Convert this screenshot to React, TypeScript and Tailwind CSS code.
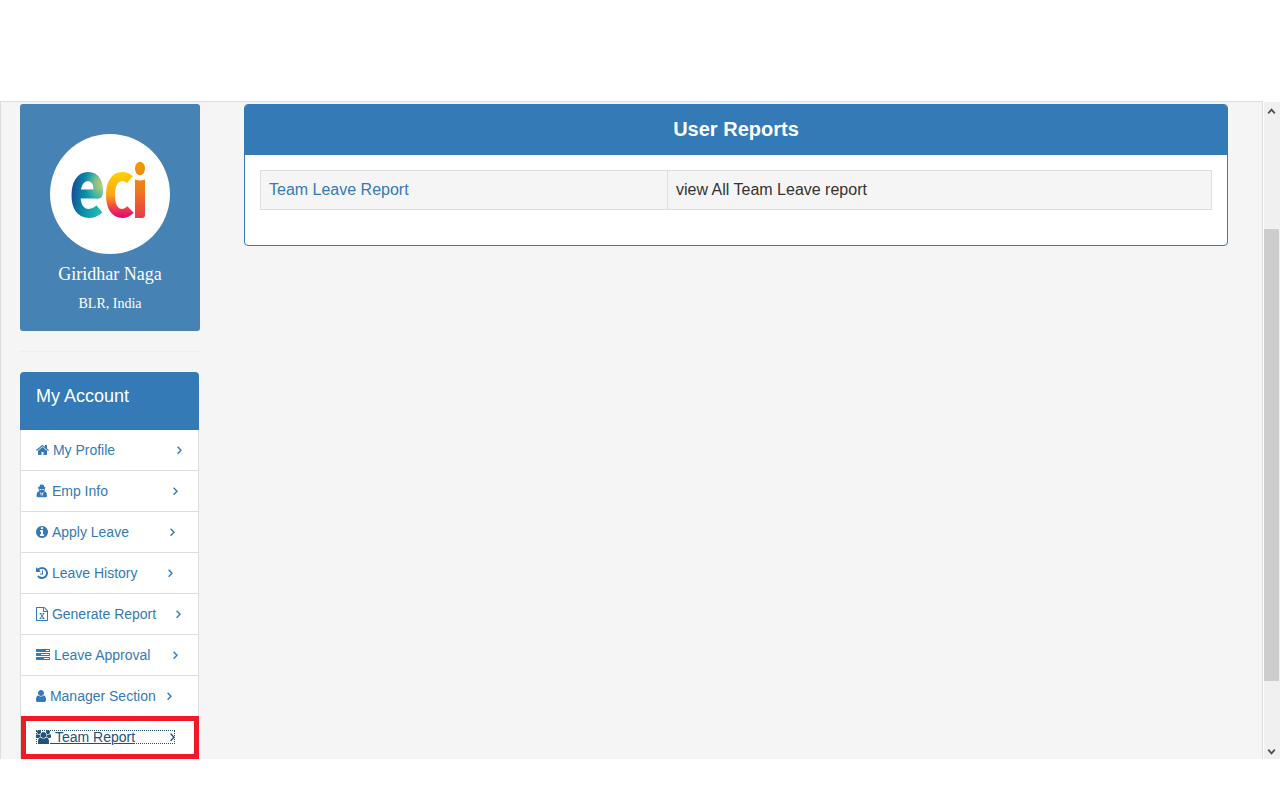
import React from "react";

const PATHS = {
  home: "M1472 992v480q0 26-19 45t-45 19h-384v-384h-256v384h-384q-26 0-45-19t-19-45v-480q0-1 .5-3t.5-3l575-474 575 474q1 2 1 6zm223-69l-62 74q-8 9-21 11h-3q-13 0-21-7l-692-577-692 577q-12 8-24 7-13-2-21-11l-62-74q-8-10-7-23.5t11-21.5l719-599q32-26 76-26t76 26l244 204v-195q0-14 9-23t23-9h192q14 0 23 9t9 23v408l219 182q10 8 11 21.5t-7 23.5z",
  info: "M1152 1376v-160q0-14-9-23t-23-9h-96v-512q0-14-9-23t-23-9h-320q-14 0-23 9t-9 23v160q0 14 9 23t23 9h96v320h-96q-14 0-23 9t-9 23v160q0 14 9 23t23 9h448q14 0 23-9t9-23zm-128-896v-160q0-14-9-23t-23-9h-192q-14 0-23 9t-9 23v160q0 14 9 23t23 9h192q14 0 23-9t9-23zm640 416q0 209-103 385.5t-279.5 279.5-385.5 103-385.5-103-279.5-279.5-103-385.5 103-385.5 279.5-279.5 385.5-103 385.5 103 279.5 279.5 103 385.5z",
  history: "M1664 896q0 156-61 298t-164 245-245 164-298 61q-172 0-327-72.5t-264-204.5q-7-10-6.5-22.5t8.5-20.5l137-138q10-9 25-9 16 2 23 12 73 95 179 147t225 52q104 0 198.5-40.5t163.5-109.5 109.5-163.5 40.5-198.5-40.5-198.5-109.5-163.5-163.5-109.5-198.5-40.5q-98 0-188 35.5t-160 101.5l137 138q31 30 14 69-17 40-59 40h-448q-26 0-45-19t-19-45v-448q0-42 40-59 39-17 69 14l130 129q107-101 244.5-156.5t284.5-55.5q156 0 298 61t245 164 164 245 61 298zm-640-288v448q0 14-9 23t-23 9h-320q-14 0-23-9t-9-23v-64q0-14 9-23t23-9h224v-352q0-14 9-23t23-9h64q14 0 23 9t9 23z",
  excel: "M1596 380q28 28 48 76t20 88v1152q0 40-28 68t-68 28h-1344q-40 0-68-28t-28-68v-1600q0-40 28-68t68-28h896q40 0 88 20t76 48zm-444-244v376h376q-10-29-22-41l-313-313q-12-12-41-22zm384 1528v-1024h-416q-40 0-68-28t-28-68v-416h-768v1536h1280zm-979-234v106h281v-106h-75l103-161q5-7 10-16.5t7.5-13.5 3.5-4h2q1 4 5 10 2 4 4.5 7.5t6 8 6.5 8.5l107 161h-76v106h291v-106h-68l-192-273 195-282h67v-107h-279v107h74l-103 159q-4 7-10 16.5t-9 13.5l-2 3h-2q-1-4-5-10-6-11-17-23l-106-159h76v-107h-290v107h68l189 272-194 283h-68z",
  tasks: "M1024 1408h640v-128h-640v128zm-384-512h1024v-128h-1024v128zm640-512h384v-128h-384v128zm512 832v256q0 26-19 45t-45 19h-1664q-26 0-45-19t-19-45v-256q0-26 19-45t45-19h1664q26 0 45 19t19 45zm0-512v256q0 26-19 45t-45 19h-1664q-26 0-45-19t-19-45v-256q0-26 19-45t45-19h1664q26 0 45 19t19 45zm0-512v256q0 26-19 45t-45 19h-1664q-26 0-45-19t-19-45v-256q0-26 19-45t45-19h1664q26 0 45 19t19 45z",
  user: "M1536 1399q0 109-62.5 187t-150.5 78h-854q-88 0-150.5-78t-62.5-187q0-85 8.5-160.5t31.5-152 58.5-131 94-89 134.5-34.5q131 128 313 128t313-128q76 0 134.5 34.5t94 89 58.5 131 31.5 152 8.5 160.5zm-256-887q0 159-112.5 271.5t-271.5 112.5-271.5-112.5-112.5-271.5 112.5-271.5 271.5-112.5 271.5 112.5 112.5 271.5z",
  users: "M529 896q-162 5-265 128h-134q-82 0-138-40.5t-56-118.5q0-353 124-353 6 0 43.5 21t97.5 42.5 119 21.5q67 0 133-23-5 37-5 66 0 143 83 256zm1071 637q0 120-73 189.5t-194 69.5h-874q-121 0-194-69.5t-73-189.5q0-53 3.5-103.5t14-109 26.5-108.5 43-97.5 62-81 85.5-53.5 111.5-20q10 0 43 21.5t73 48 107 48 135 21.5 135-21.5 107-48 73-48 43-21.5q61 0 111.5 20t85.5 53.5 62 81 43 97.5 26.5 108.5 14 109 3.5 103.5zm-1024-1277q0 106-75 181t-181 75-181-75-75-181 75-181 181-75 181 75 75 181zm704 384q0 159-112.5 271.5t-271.5 112.5-271.5-112.5-112.5-271.5 112.5-271.5 271.5-112.5 271.5 112.5 112.5 271.5zm576 225q0 78-56 118.5t-138 40.5h-134q-103-123-265-128 83-113 83-256 0-29-5-66 66 23 133 23 59 0 119-21.5t97.5-42.5 43.5-21q124 0 124 353zm-128-609q0 106-75 181t-181 75-181-75-75-181 75-181 181-75 181 75 75 181z",
  angle: "M1171 960q0 13-10 23l-466 466q-10 10-23 10t-23-10l-50-50q-10-10-10-23t10-23l393-393-393-393q-10-10-10-23t10-23l50-50q10-10 23-10t23 10l466 466q10 10 10 23z",
};

function Icon({ name, box, className }: { name: keyof typeof PATHS; box: string; className: string }) {
  return (
    <svg aria-hidden="true" viewBox={box} fill="currentColor" className={`h-[14px] shrink-0 ${className}`}>
      <path d={PATHS[name]} />
    </svg>
  );
}

function AgentIcon() {
  return (
    <svg aria-hidden="true" viewBox="0 0 12 14" fill="currentColor" className="h-[14px] w-3 shrink-0">
      <path
        fillRule="evenodd"
        d="M3.300 3L3.900 1Q4.300 .2 5 .7Q5.700 1 6.300 .7Q7.200 .2 7.600 1L8.200 3Q9.700 3.300 9.700 3.800Q9.700 4.200 8.900 4.400Q9.100 6.200 8 7.200L9.300 7.600Q11 8.500 11 12Q11 13.300 9.500 13.300H2Q.5 13.300 .5 12Q.5 8.500 2.200 7.600L3.500 7.200Q2.400 6.200 2.600 4.400Q1.800 4.200 1.800 3.800Q1.800 3.300 3.300 3ZM3.400 4.900Q3.500 5.900 4.400 5.900Q5.200 5.900 5.500 5.200H6Q6.300 5.900 7.100 5.900Q8 5.900 8.100 4.900ZM4 8L5.200 12.400L5.500 9.300ZM7.500 8L6 9.300L6.300 12.400Z"
      />
    </svg>
  );
}

type Item = { label: string; icon: React.ReactNode; width: string; active?: boolean };

const ITEMS: Item[] = [
  { label: "My Profile", icon: <Icon name="home" box="64 0 1664 1792" className="w-[13px]" />, width: "w-[146px]" },
  { label: "Emp Info", icon: <AgentIcon />, width: "w-[142px]" },
  { label: "Apply Leave", icon: <Icon name="info" box="128 0 1536 1792" className="w-3" />, width: "w-[139px]" },
  { label: "Leave History", icon: <Icon name="history" box="128 0 1536 1792" className="w-3" />, width: "w-[137px]" },
  { label: "Generate Report", icon: <Icon name="excel" box="128 0 1536 1792" className="w-3" />, width: "w-[145px]" },
  { label: "Leave Approval", icon: <Icon name="tasks" box="0 0 1792 1792" className="w-[14px]" />, width: "w-[142px]" },
  { label: "Manager Section", icon: <Icon name="user" box="256 0 1280 1792" className="w-[10px]" />, width: "w-[136px]" },
  { label: "Team Report", icon: <Icon name="users" box="-64 0 1920 1792" className="w-[15px]" />, width: "w-[139px]", active: true },
];

function Logo() {
  return (
    <svg role="img" aria-label="eci" viewBox="0 0 120 120" className="size-[120px] rounded-full bg-white">
      <defs>
        <linearGradient id="sea" gradientUnits="userSpaceOnUse" x1="22" y1="56" x2="54" y2="60">
          <stop offset="0" stopColor="#1b4a9b" />
          <stop offset="0.3" stopColor="#0a7fa6" />
          <stop offset="0.65" stopColor="#12a5b0" />
          <stop offset="1" stopColor="#2cbcb8" />
        </linearGradient>
        <radialGradient id="leaf" gradientUnits="userSpaceOnUse" cx="53" cy="50" r="19">
          <stop offset="0" stopColor="#c8d06c" />
          <stop offset="0.4" stopColor="#a4c878" stopOpacity="0.8" />
          <stop offset="1" stopColor="#6fbf90" stopOpacity="0" />
        </radialGradient>
        <linearGradient id="sun" gradientUnits="userSpaceOnUse" x1="66" y1="38" x2="67" y2="84">
          <stop offset="0" stopColor="#ffd200" />
          <stop offset="0.5" stopColor="#fba51a" />
          <stop offset="0.75" stopColor="#ee4a3f" />
          <stop offset="1" stopColor="#e6007e" />
        </linearGradient>
        <linearGradient id="fire" gradientUnits="userSpaceOnUse" x1="88" y1="28" x2="92" y2="84">
          <stop offset="0" stopColor="#f39a00" />
          <stop offset="0.5" stopColor="#ee7a1e" />
          <stop offset="1" stopColor="#e63b48" />
        </linearGradient>
      </defs>
      <g fill="none" strokeWidth="9" strokeLinejoin="round">
        {["url(#sea)", "url(#leaf)"].map((paint) => (
          <path
            key={paint}
            stroke={paint}
            d="M27 60H48C49 50 46 42.500 38 42.500C30.500 42.500 26 50 26 61C26 73 30.500 79.500 39 79.500C43 79.500 46 78 49.500 75"
          />
        ))}
        <path
          stroke="url(#sun)"
          d="M80 45.500C77 43 74 42.500 72.500 42.500C64.500 42.500 60.500 50 60.500 61C60.500 73 65 79.500 72.500 79.500C75.500 79.500 78 78 80.500 75.500"
        />
      </g>
      <ellipse cx="90" cy="34.500" rx="5" ry="6.700" fill="url(#fire)" />
      <path fill="url(#fire)" d="M85 45.500Q90 47.500 95 45.500V81Q95 84 92 84H85Z" />
    </svg>
  );
}

function ProfileCard() {
  return (
    <section className="flex flex-col items-center rounded-[3px] bg-[#4682b4] pt-[30px] pb-[17px] font-['Liberation_Serif',serif] text-white">
      <Logo />
      <h2 className="mt-[10px] text-[18px] leading-5">Giridhar Naga</h2>
      <p className="mt-[10px] text-[14px] leading-5">BLR, India</p>
    </section>
  );
}

function AccountMenu() {
  return (
    <nav aria-label="My Account" className="mr-px">
      <h2 className="h-[58px] rounded-t-[4px] bg-[#337ab7] px-4 pt-[14px] text-[18px] leading-5 text-white">My Account</h2>
      <ul className="border-x border-[#ddd] bg-white">
        {ITEMS.map((item) => (
          <li key={item.label} className="relative border-b border-[#ddd] px-[15px] py-[13px] text-[14px] leading-[14px]">
            <a
              href="#"
              className={`flex items-center justify-between ${item.width} ${
                item.active ? "text-[#23527c] outline-1 outline-dotted outline-[#23527c] -outline-offset-1" : "text-[#337ab7]"
              }`}
            >
              <span className="flex items-center whitespace-nowrap">
                {item.icon}
                <span className={item.active ? "underline" : ""}>&nbsp;{item.label}</span>
              </span>
              <svg aria-hidden="true" viewBox="0 0 5 14" fill="none" stroke="currentColor" strokeWidth="1.400" className="h-[14px] w-[5px] shrink-0">
                <path d="M.6 3.800L4 7.300L.6 10.800" />
              </svg>
            </a>
            {item.active && <span className="pointer-events-none absolute -top-px -right-px left-0 h-[43px] border-[5px] border-[#ed1c24]" />}
          </li>
        ))}
      </ul>
    </nav>
  );
}

function ReportsPanel() {
  return (
    <section className="overflow-hidden rounded-[4px] border border-[#337ab7] bg-white">
      <h1 className="bg-[#337ab7] pt-3 pb-[14px] text-center text-[20px] leading-6 font-bold text-white">User Reports</h1>
      <div className="px-[15px] pt-[15px] pb-[35px]">
        <table className="w-full table-fixed border-collapse bg-[#f5f5f5] text-left text-[16px] leading-[22px] text-[#333]">
          <colgroup>
            <col className="w-[407px]" />
            <col />
          </colgroup>
          <tbody>
            <tr>
              <td className="border border-[#ddd] px-2 py-2">
                <a href="#" className="text-[#337ab7]">Team Leave Report</a>
              </td>
              <td className="border border-[#ddd] px-2 py-2">view All Team Leave report</td>
            </tr>
          </tbody>
        </table>
      </div>
    </section>
  );
}

function Scrollbar() {
  return (
    <div aria-hidden="true" className="mt-px ml-px flex w-4 shrink-0 flex-col items-center bg-[#f0f0f0] text-[#505050]">
      <svg viewBox="0 0 16 17" className="h-[17px] w-4" fill="none" stroke="currentColor" strokeWidth="1.800">
        <path d="M4.200 11.300L7.500 7.700L10.800 11.300" />
      </svg>
      <div className="flex w-full grow flex-col">
        <div className="grow-[110]" />
        <div className="mr-px grow-[452] bg-[#cdcdcd]" />
        <div className="grow-[61]" />
      </div>
      <svg viewBox="0 0 16 17" className="h-[17px] w-4" fill="none" stroke="currentColor" strokeWidth="1.800">
        <path d="M4.200 7.700L7.500 11.300L10.800 7.700" />
      </svg>
    </div>
  );
}

export default function App() {
  return (
    <div className="flex h-screen flex-col bg-white pt-[101px] pb-[41px] font-['Liberation_Sans',Arial,sans-serif]">
      <div className="flex min-h-0 grow">
        <div className="flex min-w-0 grow items-start overflow-hidden border-x border-t border-[#ddd] bg-[#f5f5f5] pt-[2px] pr-[34px] pl-[19px]">
          <aside className="w-[180px] shrink-0">
            <ProfileCard />
            <hr className="my-5 border-[#eee]" />
            <AccountMenu />
          </aside>
          <main className="ml-11 min-w-0 grow">
            <ReportsPanel />
          </main>
        </div>
        <Scrollbar />
      </div>
    </div>
  );
}
